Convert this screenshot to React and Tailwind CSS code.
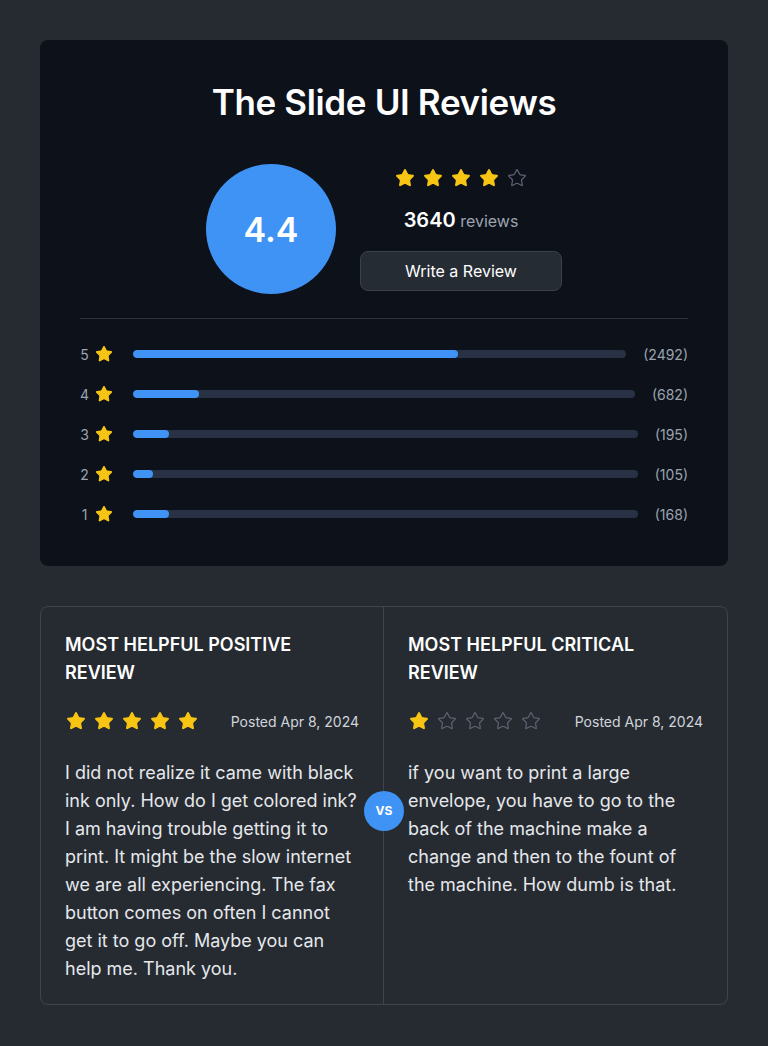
import React from "react";
import { Star } from "lucide-react";

const F = { fontFamily: "Inter, 'Noto Sans', sans-serif" };

function Stars({ n, size = 20, gap = "gap-2" }) {
  return (
    <div className={`flex items-center ${gap}`}>
      {[0, 1, 2, 3, 4].map((i) =>
        i < n ? (
          <Star key={i} size={size} strokeWidth={1.5} className="text-[#f9c514] fill-[#f9c514]" />
        ) : (
          <Star key={i} size={size} strokeWidth={1.5} className="text-[#5b6270]" />
        )
      )}
    </div>
  );
}

const rows = [
  { s: 5, c: "(2492)", w: 65.8 },
  { s: 4, c: "(682)", w: 13.1 },
  { s: 3, c: "(195)", w: 7.1 },
  { s: 2, c: "(105)", w: 4 },
  { s: 1, c: "(168)", w: 7.1 },
];

export default function App() {
  return (
    <div style={F} className="min-h-[1046px] bg-[#262b32] p-10 flex flex-col gap-10">
      <div className="bg-[#0c111a] rounded-lg px-10 pt-[38px] pb-[43px]">
        <h1 className="text-center text-white text-[35px] leading-[48px] font-semibold tracking-[-0.01em]">
          The Slide UI Reviews
        </h1>
        <div className="mt-[38px] flex items-center justify-center gap-6">
          <div className="w-[130px] h-[130px] rounded-full bg-[#3f93f4] flex items-center justify-center text-white text-[34px] font-semibold">
            4.4
          </div>
          <div className="flex flex-col items-center w-[202px]">
            <Stars n={4} size={20} gap="gap-2" />
            <div className="mt-[20px] text-white leading-6">
              <span className="text-[20px] font-semibold">3640</span>{" "}
              <span className="text-[16px] text-[#9ca3af]">reviews</span>
            </div>
            <button className="mt-[18px] w-[202px] h-[40px] rounded-lg bg-[#262c33] border border-[#3b414a] text-white text-[16px]">
              Write a Review
            </button>
          </div>
        </div>
        <div className="mt-[24px] h-px bg-[#2d333d]" />
        <div className="mt-[26px] flex flex-col gap-[22px]">
          {rows.map((r) => (
            <div key={r.s} className="flex items-center h-[18px]">
              <span className="text-[14px] text-[#9ca3af] w-[9px] text-center">{r.s}</span>
              <Star size={18} strokeWidth={1.5} className="ml-[6px] text-[#f9c514] fill-[#f9c514]" />
              <div className="ml-[20px] flex-1 h-2 rounded-full bg-[#283244] overflow-hidden">
                <div className="h-full rounded-full bg-[#3f93f4]" style={{ width: r.w + "%" }} />
              </div>
              <span className="ml-[17px] text-[14px] text-[#9ca3af]">{r.c}</span>
            </div>
          ))}
        </div>
      </div>

      <div className="relative border border-[#3e444d] rounded-lg grid grid-cols-2">
        <div className="px-6 pt-6 pb-[21px] border-r border-[#3e444d]">
          <h2 className="text-white text-[18px] leading-7 font-semibold uppercase">Most helpful positive review</h2>
          <div className="mt-[22px] flex items-center justify-between h-6">
            <div className="pl-px"><Stars n={5} size={20} gap="gap-2" /></div>
            <span className="text-[14px] text-[#d1d5db]">Posted Apr 8, 2024</span>
          </div>
          <p className="mt-[26px] text-[18px] leading-7 text-[#e5e7eb]">
            I did not realize it came with black ink only. How do I get colored ink? I am having trouble getting it to print. It might be the slow internet we are all experiencing. The fax button comes on often I cannot get it to go off. Maybe you can help me. Thank you.
          </p>
        </div>
        <div className="px-6 pt-6 pb-[21px]">
          <h2 className="text-white text-[18px] leading-7 font-semibold uppercase">Most helpful critical review</h2>
          <div className="mt-[22px] flex items-center justify-between h-6">
            <div className="pl-px"><Stars n={1} size={20} gap="gap-2" /></div>
            <span className="text-[14px] text-[#d1d5db]">Posted Apr 8, 2024</span>
          </div>
          <p className="mt-[26px] text-[18px] leading-7 text-[#e5e7eb]">
            if you want to print a large envelope, you have to go to the back of the machine make a change and then to the fount of the machine. How dumb is that.
          </p>
        </div>
        <div className="absolute left-1/2 top-[184px] -translate-x-1/2 w-10 h-10 rounded-full bg-[#3f93f4] flex items-center justify-center text-white text-[12px] font-bold">
          VS
        </div>
      </div>
    </div>
  );
}
